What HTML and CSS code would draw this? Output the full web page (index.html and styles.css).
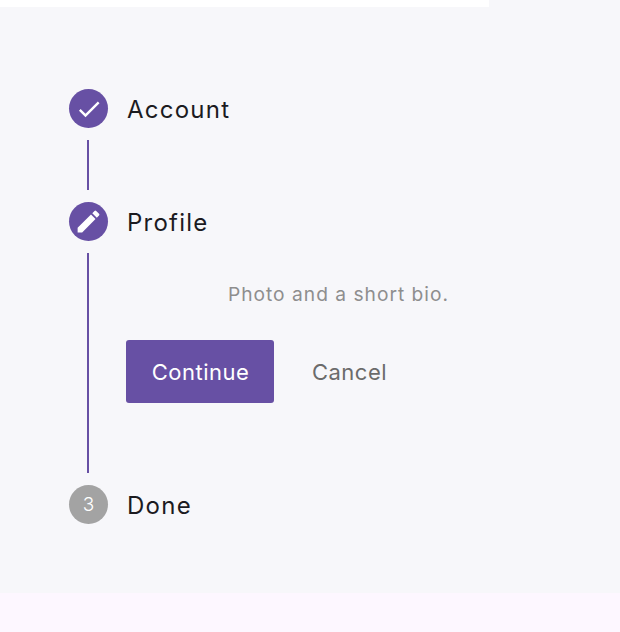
FILE: index.html
```html
<!DOCTYPE html>
<html lang="en">
<head>
  <meta charset="UTF-8" />
  <meta name="viewport" content="width=device-width,initial-scale=1.0" />
  <title>Stepper</title>
  <link rel="stylesheet" href="styles.css">
</head>
<body>
  <div class="top-strip"></div>

  <main class="stepper">
    <div class="step">
      <span class="dot">
        <svg class="dot-icon dot-icon-check" viewBox="0 0 24 24"><path d="M9 16.17 4.83 12l-1.42 1.41L9 19 21 7l-1.41-1.41z"/></svg>
      </span>
      <span class="step-title">Account</span>
    </div>
    <div class="rail rail-short"></div>

    <div class="step">
      <span class="dot">
        <svg class="dot-icon" viewBox="0 0 24 24"><path d="M3 17.25V21h3.75L17.81 9.94l-3.75-3.75L3 17.25zM20.71 7.04a1 1 0 0 0 0-1.41l-2.34-2.34a1 1 0 0 0-1.41 0l-1.83 1.83 3.75 3.75 1.83-1.83z"/></svg>
      </span>
      <span class="step-title">Profile</span>
    </div>
    <div class="rail rail-open">
      <div class="step-body">
        <p class="step-text">Photo and a short bio.</p>
        <div class="actions">
          <button class="btn-continue" type="button">Continue</button>
          <button class="btn-cancel" type="button">Cancel</button>
        </div>
      </div>
    </div>

    <div class="step">
      <span class="dot dot-todo">3</span>
      <span class="step-title">Done</span>
    </div>
  </main>

  <div class="bottom-area"></div>
</body>
</html>
```

FILE: styles.css
```css
html,body{height:100%;}
body{
  margin:0;
  display:flex;flex-direction:column;
  background:#f7f7fa;
  font-family:"Inter",sans-serif;
  overflow:hidden;
}
.top-strip{width:489px;height:7px;background:#fff;flex:none;}
.stepper{
  flex:none;height:586px;box-sizing:border-box;
  padding:82px 0 0 69px;
}
.step{display:flex;align-items:center;gap:19px;height:39px;}
.dot{
  width:39px;height:39px;border-radius:50%;flex:none;
  display:flex;align-items:center;justify-content:center;
  background:#6750a4;color:#fff;font-size:19px;font-weight:300;
}
.dot-todo{background:#a3a3a3;}
.dot-icon{width:29px;height:29px;fill:#fff;}
.dot-icon-check{width:28px;height:28px;}
.step-title{font-size:24px;letter-spacing:1.25px;color:#1c1b1f;padding-top:1px;}
.rail{
  margin:12px 0 12px 18px;
  border-left:2px solid #6750a4;
}
.rail-short{height:50px;}
.rail-open{height:220px;box-sizing:border-box;}
.step-body{width:423px;margin-left:38px;padding-top:28px;}
.step-text{
  margin:0 0 33px;text-align:center;
  font-size:19.2px;line-height:26px;letter-spacing:1px;color:#8e8e8e;
}
.actions{display:flex;align-items:center;}
button{font-family:inherit;font-size:22px;border:none;cursor:pointer;letter-spacing:.5px;}
.btn-continue{
  width:148px;height:63px;margin-left:-1px;padding:0 0 0 1px;
  background:#6750a4;color:#fff;border-radius:3px;
}
.btn-cancel{
  width:150px;height:63px;padding:0 0 0 1px;background:none;color:#6b6b6b;
}
.bottom-area{flex:1;background:#fdf7ff;}
```
